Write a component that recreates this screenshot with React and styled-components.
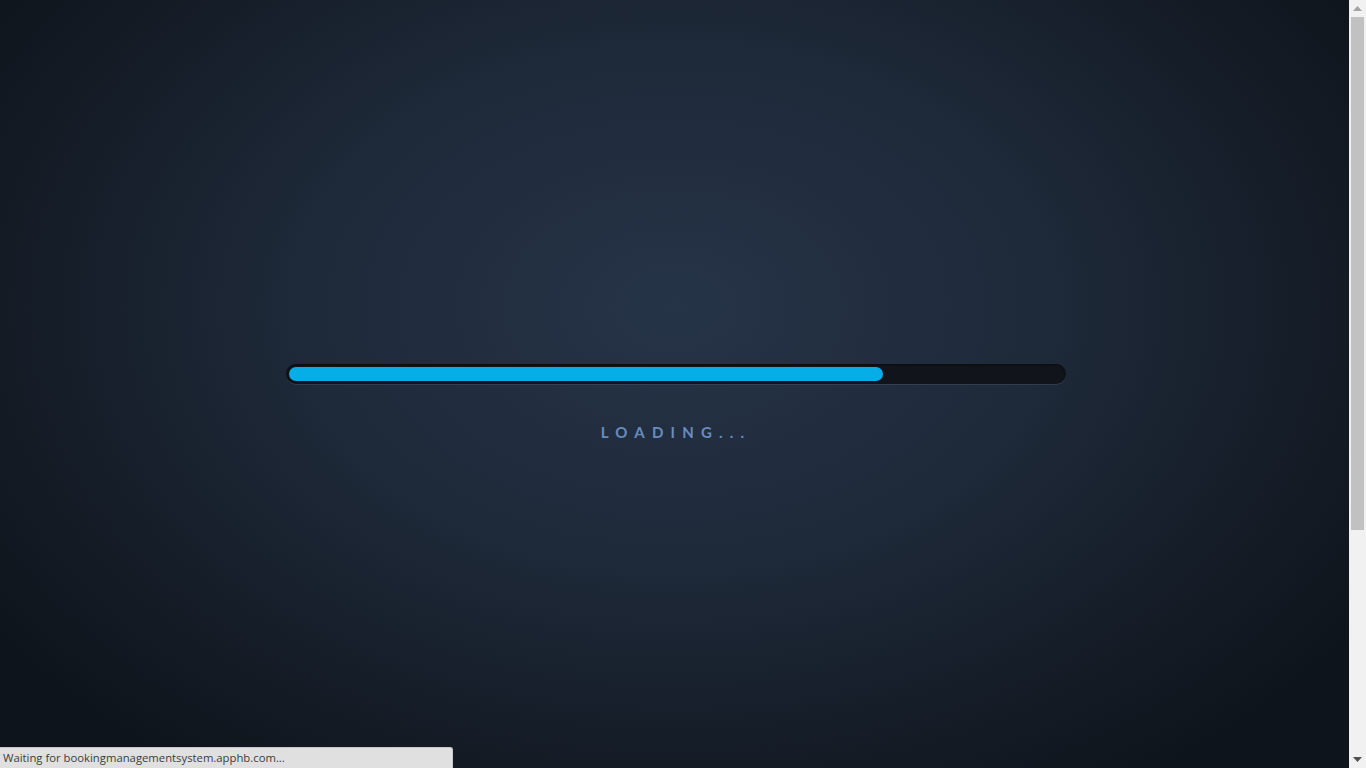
import React from "react";
import styled, { createGlobalStyle } from "styled-components";

const Global = createGlobalStyle`
  html, body {
    margin: 0;
    padding: 0;
    overflow: hidden;
  }
  body {
    font-family: Lato, "Open Sans", sans-serif;
    background: #111821;
  }
`;

const Viewport = styled.div`
  display: flex;
  height: 100vh;
  width: 100vw;
`;

const Content = styled.main`
  flex: 1;
  display: flex;
  flex-direction: column;
  align-items: center;
  padding-top: 364px;
  box-sizing: border-box;
  background: radial-gradient(ellipse 62% 75% at 50% 40%, #263448 0%, #1e2939 45%, #151d28 75%, #0e141b 100%);
`;

const Track = styled.div`
  width: 780px;
  height: 20px;
  padding: 3px;
  box-sizing: border-box;
  border-radius: 10px;
  background: #11151b;
  box-shadow: 0 1px 0 rgba(255, 255, 255, 0.09), inset 0 1px 2px rgba(0, 0, 0, 0.5);
  margin-left: 2px;
`;

const Fill = styled.div`
  height: 14px;
  border-radius: 7px;
  background: #07ade6;
`;

const Label = styled.div`
  margin-top: 39px;
  font-family: Lato, "Open Sans", sans-serif;
  font-weight: 700;
  font-size: 15px;
  letter-spacing: 7.2px;
  color: #6a8cbb;
  padding-left: 3px;
`;

const Scrollbar = styled.div`
  width: 17px;
  flex: none;
  display: flex;
  flex-direction: column;
  background: #f1f1f1;
`;

const ScrollButton = styled.div`
  height: 17px;
  flex: none;
  display: flex;
  align-items: center;
  justify-content: center;
`;

const ScrollTrack = styled.div`
  flex: 1;
  display: flex;
  flex-direction: column;
  padding: 0 2px;
`;

const Thumb = styled.div`
  background: #c1c1c1;
`;

const StatusBar = styled.div`
  position: fixed;
  left: 0;
  bottom: 0;
  width: 453px;
  height: 21px;
  box-sizing: border-box;
  background: #e0e0e0;
  border-top-right-radius: 3px;
  border-top: 1px solid #c8c8c8;
  border-right: 1px solid #c8c8c8;
  padding: 2px 0 0 3px;
  font-family: "Open Sans", "Noto Sans", sans-serif;
  font-size: 11.3px;
  color: #3c3c3c;
  line-height: 16px;
  white-space: nowrap;
`;

const Arrow = ({ up, color }) => (
  <svg width="9" height="5" viewBox="0 0 9 5">
    <polygon points={up ? "0,5 9,5 4.5,0" : "0,0 9,0 4.5,5"} fill={color} />
  </svg>
);

export default function App() {
  const progress = 0.768;
  const thumb = 513;
  return (
    <>
      <Global />
      <Viewport>
        <Content>
          <Track>
            <Fill style={{ width: `${progress * 100}%` }} />
          </Track>
          <Label>LOADING...</Label>
        </Content>
        <Scrollbar>
          <ScrollButton>
            <Arrow up color="#a3a3a3" />
          </ScrollButton>
          <ScrollTrack>
            <Thumb style={{ height: `${thumb}px` }} />
          </ScrollTrack>
          <ScrollButton>
            <Arrow color="#505050" />
          </ScrollButton>
        </Scrollbar>
      </Viewport>
      <StatusBar>Waiting for bookingmanagementsystem.apphb.com...</StatusBar>
    </>
  );
}
